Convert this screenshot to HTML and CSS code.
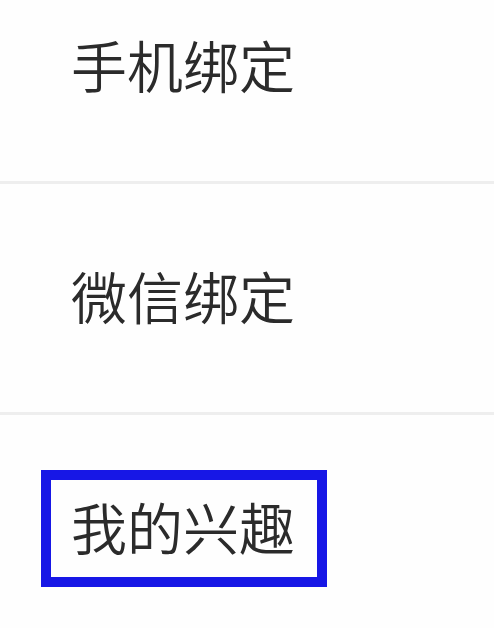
FILE: index.html
```html
<!DOCTYPE html>
<html lang="zh-CN">
<head>
<meta charset="utf-8">
<title>设置</title>
<link rel="stylesheet" href="styles.css">
</head>
<body>
<ul class="menu">
  <li class="menu-row"><span class="menu-label">手机绑定</span></li>
  <li class="menu-row"><span class="menu-label">微信绑定</span></li>
  <li class="menu-row"><span class="menu-label menu-label--active">我的兴趣</span></li>
</ul>
</body>
</html>
```
FILE: styles.css
```css
html, body {
  margin: 0;
  padding: 0;
  background: #fefefe;
}

body {
  height: 628px;
  overflow: hidden;
  font-family: "Noto Sans CJK SC", "Noto Sans", sans-serif;
  color: #2b2b2b;
}

.menu {
  list-style: none;
  margin: -47px 0 0 0;
  padding: 0;
}

.menu-row {
  display: flex;
  align-items: center;
  box-sizing: border-box;
  height: 231px;
  padding-left: 41px;
  padding-bottom: 2px;
  border-bottom: 3px solid #eeeeee;
}

.menu-label {
  display: inline-block;
  font-size: 56px;
  font-weight: 350;
  line-height: 92px;
  padding: 0 22px 5px 20px;
  border: 10px solid transparent;
  white-space: nowrap;
}

.menu-label--active {
  border-color: #1717e6;
}
```
